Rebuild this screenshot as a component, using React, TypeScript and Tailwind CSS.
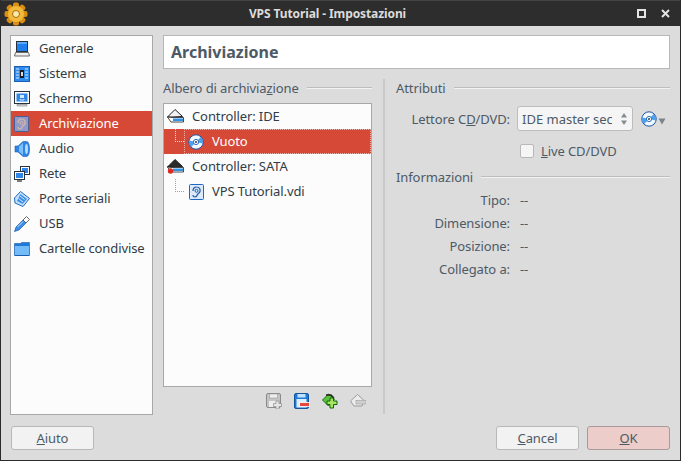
import type { ReactNode } from "react"

function Monitor() {
  return (
    <svg width="16" height="16" viewBox="0 0 16 16">
      <rect x="2.500" y="0.500" width="11" height="10" fill="#1f7fee" stroke="#26323e" />
      <rect x="3" y="1" width="10" height="2" fill="#5aa8f7" />
      <path d="M1.500 11.500h13l1 3.500H0.500z" fill="#f0f0f0" stroke="#4a4a4a" strokeWidth="0.8" />
    </svg>
  )
}

function Chip() {
  return (
    <svg width="16" height="16" viewBox="0 0 16 16">
      <rect x="0.500" y="0.500" width="15" height="15" fill="#2e8cf0" stroke="#1b5fb0" />
      <path d="M2 3h3M2 6h3M2 9h3M2 12h3M11 3h3M11 6h3M11 9h3M11 12h3" stroke="#d7ebff" />
      <rect x="6" y="4" width="4" height="8" fill="#1d1d1d" />
      <rect x="7" y="6" width="2" height="4" fill="#d9d9d9" />
    </svg>
  )
}

function Screen() {
  return (
    <svg width="16" height="16" viewBox="0 0 16 16">
      <rect x="0.500" y="0.500" width="15" height="12" fill="#fff" stroke="#26323e" />
      <rect x="2.500" y="2.500" width="11" height="8" fill="#2f86e6" />
      <rect x="6" y="4" width="4" height="3" fill="#d7ebff" />
      <path d="M6 8v1h4V8" fill="none" stroke="#d7ebff" />
      <path d="M3 13.500h10V15H3z" fill="#e4e4e4" stroke="#777" strokeWidth="0.6" />
    </svg>
  )
}

function Disk({ dim = false }: { dim?: boolean }) {
  return (
    <svg width="16" height="16" viewBox="0 0 16 16">
      <rect x="0.500" y="0.500" width="14" height="15" rx="1" fill={dim ? "#8f9bc6" : "#dceafb"} stroke={dim ? "#4b5e95" : "#1d68c4"} />
      <path d="M7.500 3c3 0 4 2.200 3.500 4.500-.4 1.800-2 1.500-2.500 3-.4 1.300-1 2.500-2.500 2.500-1.200 0-2-1-2-2" fill="none" stroke={dim ? "#d9b7ad" : "#1d5aa8"} strokeWidth="1.200" />
      <path d="M4 7c0-2.500 1.500-4 3.500-4" fill="none" stroke={dim ? "#d9b7ad" : "#1d5aa8"} strokeWidth="1.200" />
      <circle cx="7.500" cy="6.800" r="1.500" fill="none" stroke={dim ? "#d9b7ad" : "#1d5aa8"} />
    </svg>
  )
}

function Speaker() {
  return (
    <svg width="16" height="16" viewBox="0 0 16 16">
      <path d="M1 5h3l5-4.500h3.500c2 0 3 3.500 3 7.500s-1 7.500-3 7.500H9L4 11H1z" fill="#2f86e6" stroke="#1a5db0" strokeWidth="0.6" />
      <path d="M5 5.500 9 2v12l-4-3.500z" fill="#7fc0fa" />
      <ellipse cx="12.500" cy="8" rx="1.500" ry="5" fill="#b5dbff" />
    </svg>
  )
}

function Network() {
  return (
    <svg width="16" height="16" viewBox="0 0 16 16">
      <rect x="6.500" y="0.500" width="9" height="8" fill="#fff" stroke="#26323e" />
      <rect x="8" y="2" width="6" height="5" fill="#2f86e6" />
      <rect x="0.500" y="5.500" width="10" height="8" fill="#fff" stroke="#26323e" />
      <rect x="2" y="7" width="7" height="5" fill="#2f86e6" />
      <path d="M3 15h5" stroke="#555" strokeWidth="1.500" />
    </svg>
  )
}

function Serial() {
  return (
    <svg width="16" height="16" viewBox="0 0 16 16">
      <path d="M6.500 0.500 15.500 7.500 9 15.500 1 12 0.500 7z" fill="#c5e2fc" stroke="#1d68c4" />
      <path d="M6.500 3 13 8l-4.500 5L3 10z" fill="#3b8fe6" />
      <path d="M6 5l4.500 3.500M4.500 7.500 9 11" stroke="#d7ecff" />
    </svg>
  )
}

function Usb() {
  return (
    <svg width="16" height="16" viewBox="0 0 16 16">
      <path d="M0.500 15.500 2 11l7-7 3 3-7 7z" fill="#3b8fe6" stroke="#1d5aa8" strokeWidth="0.7" />
      <path d="M3.500 11 9 5.500" stroke="#b5dbff" />
      <path d="M9 4l3.500-3.500 3 3L12 7z" fill="#fff" stroke="#444" strokeWidth="0.8" />
    </svg>
  )
}

function Folder() {
  return (
    <svg width="16" height="16" viewBox="0 0 16 16">
      <path d="M0.500 2.500h6l1-1h8V14.500H0.500z" fill="#1f7ad6" stroke="#1a5db0" strokeWidth="0.6" />
      <rect x="1" y="5" width="14" height="9" fill="#74bcf8" />
      <path d="M1 14.500h14" stroke="#1a5db0" />
    </svg>
  )
}

function Cd() {
  return (
    <svg width="16" height="16" viewBox="0 0 16 16">
      <circle cx="8" cy="8" r="7.200" fill="#f2f8ff" stroke="#1c55a5" />
      <path d="M8 8 12.800 3A7 7 0 0 1 14.800 9.500zM8 8 3.200 13A7 7 0 0 1 1.200 6.500z" fill="#4f9fec" />
      <circle cx="8" cy="8" r="2.600" fill="#fff" stroke="#2a6fc0" />
      <circle cx="8" cy="8" r="0.900" fill="#12233a" />
    </svg>
  )
}

function Controller({ red = false }: { red?: boolean }) {
  return (
    <svg width="17" height="17" viewBox="0 0 17 17">
      <path d="M0.500 9 8 1.500 15.500 8.500 5 9z" fill={red ? "#2b2b2b" : "#f2f2f2"} stroke="#1d1d1d" />
      <path d="M0.500 9 4 14h12.500V9.500H5z" fill="#fff" stroke="#1d1d1d" strokeWidth="0.8" />
      <rect x="6" y="10.500" width="10" height="2.500" fill="#2f93ea" />
      {red && <circle cx="3.500" cy="13" r="2.700" fill="#d92b20" />}
    </svg>
  )
}

function Gear() {
  return (
    <svg width="24" height="24" viewBox="0 0 24 24">
      <g fill="#d98f12">
        <rect x="9" y="0.500" width="6" height="23" rx="2" />
        <rect x="0.500" y="9" width="23" height="6" rx="2" />
        <rect x="9" y="0.500" width="6" height="23" rx="2" transform="rotate(45 12 12)" />
        <rect x="9" y="0.500" width="6" height="23" rx="2" transform="rotate(-45 12 12)" />
      </g>
      <circle cx="12" cy="12" r="8" fill="#f3b93a" />
      <circle cx="12" cy="12" r="3.500" fill="#fbe9a8" stroke="#a86a10" />
    </svg>
  )
}

function FloppyAdd() {
  return (
    <svg width="16" height="16" viewBox="0 0 16 16">
      <rect x="0.500" y="0.500" width="14" height="14" rx="1.500" fill="#c4c4c4" stroke="#8a8a8a" />
      <rect x="3.500" y="1" width="8" height="4" fill="#eee" stroke="#999" strokeWidth="0.6" />
      <rect x="3" y="8" width="9" height="6" fill="#eee" />
      <path d="M10 8h3v2.500h2.500v3H13V16h-3v-2.500H7.500v-3H10z" fill="#e6e6e6" stroke="#8a8a8a" strokeWidth="0.7" />
    </svg>
  )
}

function FloppyRemove() {
  return (
    <svg width="16" height="16" viewBox="0 0 16 16">
      <rect x="0.500" y="0.500" width="14" height="15" rx="1.500" fill="#1f7ad6" stroke="#15559e" />
      <rect x="3.500" y="1" width="8" height="3.500" fill="#bfe0ff" />
      <rect x="2.500" y="6" width="10" height="8.500" fill="#dcedff" />
      <rect x="5.500" y="9.500" width="10" height="4" fill="#e5483a" stroke="#fff" strokeWidth="0.8" />
    </svg>
  )
}

function ControllerAdd() {
  return (
    <svg width="16" height="16" viewBox="0 0 16 16">
      <path d="M0.500 7 6.500 1l6 5-6 7z" fill="#58c23a" stroke="#1f6a14" />
      <path d="M4 2h5l3 3" fill="none" stroke="#222" strokeWidth="1.300" />
      <path d="M8 5h3.500v3H15v3.500h-3.500V15H8v-3.500H5V8h3z" fill="#a5e860" stroke="#16600f" />
    </svg>
  )
}

function ControllerRemove() {
  return (
    <svg width="16" height="16" viewBox="0 0 16 16">
      <path d="M0.500 8 7.500 1.500 14 7.500 12 13H4z" fill="#ececec" stroke="#9a9a9a" />
      <rect x="6" y="7.500" width="10" height="3.500" fill="#d0d0d0" stroke="#a5a5a5" strokeWidth="0.7" />
    </svg>
  )
}

const sections: { label: string; icon: ReactNode }[] = [
  { label: "Generale", icon: <Monitor /> },
  { label: "Sistema", icon: <Chip /> },
  { label: "Schermo", icon: <Screen /> },
  { label: "Archiviazione", icon: <Disk dim /> },
  { label: "Audio", icon: <Speaker /> },
  { label: "Rete", icon: <Network /> },
  { label: "Porte seriali", icon: <Serial /> },
  { label: "USB", icon: <Usb /> },
  { label: "Cartelle condivise", icon: <Folder /> },
]

const info = [
  { label: "Tipo:", value: "--" },
  { label: "Dimensione:", value: "--" },
  { label: "Posizione:", value: "--" },
  { label: "Collegato a:", value: "--" },
]

function GroupTitle({ children }: { children: ReactNode }) {
  return (
    <div className="flex items-center gap-2 h-[18px]">
      <span className="text-[#4d5a66]">{children}</span>
      <div className="flex-1 h-[2px] bg-[#f2f2f2] border-t border-[#bdbdbd]" />
    </div>
  )
}

function Tree() {
  return (
    <div className="mt-[6px] h-[284px] border border-[#a8a8a8] bg-[#fcfcfc] text-[#313c47]">
      <div className="flex items-center h-[25px] pl-[3px] gap-[8px]">
        <Controller />
        <span className="pb-[2px]">Controller: IDE</span>
      </div>
      <div className="flex items-center h-[25px] bg-[#d64937] text-white">
        <div className="ml-[11px] w-[9px] h-[13px] mb-[12px] border-l border-b border-dotted border-[#dfe7ee]" />
        <div className="flex flex-1 h-full items-center pl-[3px] gap-[8px] border border-dotted border-[#e8b5ae]">
          <Cd />
          <span className="pb-[2px]">Vuoto</span>
        </div>
      </div>
      <div className="flex items-center h-[25px] pl-[3px] gap-[8px]">
        <Controller red />
        <span className="pb-[2px]">Controller: SATA</span>
      </div>
      <div className="flex items-center h-[25px]">
        <div className="ml-[11px] w-[9px] h-[13px] mb-[12px] border-l border-b border-dotted border-[#a0a0a0]" />
        <div className="flex items-center pl-[5px] gap-[7px]">
          <Disk />
          <span className="pb-[2px]">VPS Tutorial.vdi</span>
        </div>
      </div>
    </div>
  )
}

export default function App() {
  return (
    <div className="w-[681px] h-[461px] flex flex-col bg-[#dcdcdc] text-[13px] leading-[18px] tracking-[-0.1px] font-['Noto_Sans',sans-serif] border-x border-b border-[#2b2b2b] overflow-hidden">
      <div className="h-[26px] shrink-0 -mx-[1px] bg-[#2d2d2d] border-t border-[#444] flex items-center text-[#dcdcdc] font-bold text-[12px] pl-[4px] pr-[5px]">
        <Gear />
        <span className="flex-1 text-center pr-[10px]">VPS Tutorial - Impostazioni</span>
        <div className="w-[9px] h-[9px] border-2 border-[#e4e4e4] mr-[15px]" />
        <svg width="9" height="9" viewBox="0 0 9 9" className="mr-[6px]">
          <path d="M1 1l7 7M8 1 1 8" stroke="#e4e4e4" strokeWidth="2" />
        </svg>
      </div>

      <div className="flex-1 flex gap-[10px] pt-[9px] pl-[9px] pr-[10px] min-h-0">
        <div className="w-[143px] h-[380px] border border-[#a8a8a8] bg-[#fcfcfc] text-[#313c47]">
          {sections.map((s) => (
            <div
              key={s.label}
              className={`flex items-center h-[25px] pl-[3px] gap-[9px] ${s.label === "Archiviazione" ? "bg-[#d64937] text-white" : ""}`}
            >
              <span className="w-[16px] h-[16px] shrink-0">{s.icon}</span>
              <span className="pb-[2px]">{s.label}</span>
            </div>
          ))}
        </div>

        <div className="flex-1 flex flex-col min-w-0">
          <div className="h-[34px] border border-[#b8b8b8] bg-white flex items-center pl-[7px] text-[16px] tracking-normal font-bold text-[#4d5a66]">
            Archiviazione
          </div>

          <div className="flex mt-[10px]">
            <div className="w-[209px] shrink-0">
              <GroupTitle>
                Albero di archivia<span className="underline">z</span>ione
              </GroupTitle>
              <Tree />
              <div className="flex justify-end gap-[12px] mt-[6px] pr-[6px] h-[16px]">
                <FloppyAdd />
                <FloppyRemove />
                <ControllerAdd />
                <ControllerRemove />
              </div>
            </div>

            <div className="w-[2px] h-[335px] bg-[#c9c9c9] ml-[11px] mr-[11px]" />

            <div className="flex-1 min-w-0 text-[#4d5a66]">
              <GroupTitle>Attributi</GroupTitle>
              <div className="flex items-center mt-[9px] h-[25px]">
                <span className="w-[114px] text-right">
                  Lettore C<span className="underline">D</span>/DVD:
                </span>
                <div className="ml-[7px] w-[116px] h-[25px] border border-[#bcbcbc] rounded-[3px] bg-[#f5f5f5] flex items-center pl-[4px] overflow-hidden">
                  <span className="w-[90px] overflow-hidden whitespace-nowrap tracking-normal">IDE master secondario</span>
                  <svg width="8" height="14" viewBox="0 0 8 14" className="ml-[8px]">
                    <path d="M4 1l3 4.500H1zM4 13l3-4.500H1z" fill="#858d94" />
                  </svg>
                </div>
                <span className="ml-[8px]">
                  <Cd />
                </span>
                <svg width="8" height="8" viewBox="0 0 8 8" className="mt-[5px] ml-[1px]">
                  <path d="M0.500 1.500h7L4 7.500z" fill="#7c848a" />
                </svg>
              </div>
              <div className="flex items-center mt-[7px] ml-[124px] h-[25px] gap-[7px]">
                <div className="w-[14px] h-[14px] border border-[#b8b8b8] rounded-[2px] bg-[#f5f5f5]" />
                <span>
                  <span className="underline">L</span>ive CD/DVD
                </span>
              </div>
              <div className="mt-[5px]">
                <GroupTitle>Informazioni</GroupTitle>
              </div>
              <div className="mt-[2px]">
                {info.map((row) => (
                  <div key={row.label} className="flex h-[23px] items-center">
                    <span className="w-[114px] text-right">{row.label}</span>
                    <span className="ml-[10px]">{row.value}</span>
                  </div>
                ))}
              </div>
            </div>
          </div>
        </div>
      </div>

      <div className="flex items-center justify-between h-[24px] mb-[10px] pl-[10px] pr-[10px] shrink-0 text-[#4d5a66]">
        <button className="w-[83px] h-[24px] border border-[#b8b8b8] rounded-[3px] bg-[#f2f2f2]">
          <span className="underline">A</span>iuto
        </button>
        <div className="flex gap-[8px]">
          <button className="w-[83px] h-[24px] border border-[#b8b8b8] rounded-[3px] bg-[#f2f2f2]">
            <span className="underline">C</span>ancel
          </button>
          <button className="w-[83px] h-[24px] border border-[#a89a98] rounded-[3px] bg-[#eccdc9]">
            <span className="underline">O</span>K
          </button>
        </div>
      </div>
    </div>
  )
}
